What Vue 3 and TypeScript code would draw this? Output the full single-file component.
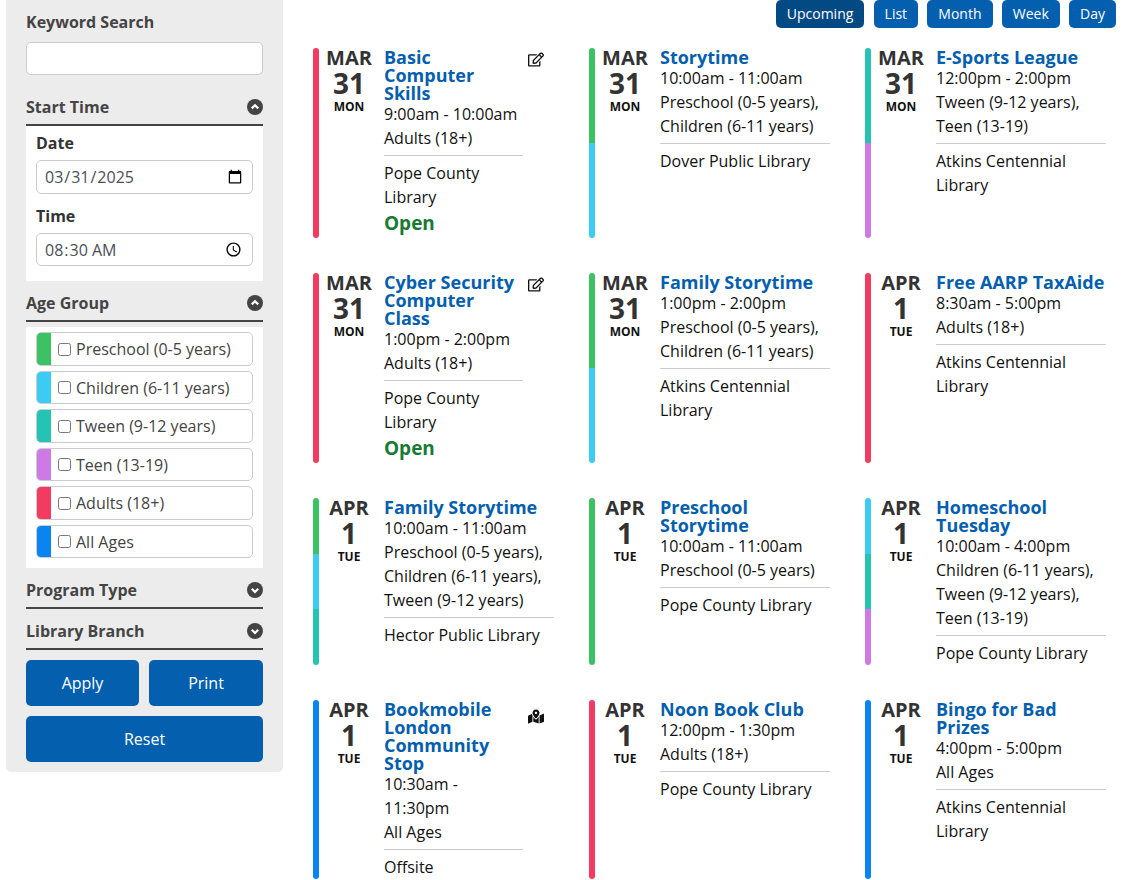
<template>
  <div class="page">
    <aside class="sidebar">
      <label class="field-title" for="keyword">Keyword Search</label>
      <input id="keyword" class="text-input keyword" type="text" />

      <div class="group-head first">
        <span>Start Time</span>
        <svg class="toggle" viewBox="0 0 16 16"><circle cx="8" cy="8" r="8" /><polyline points="4.8,9.4 8,6.2 11.2,9.4" /></svg>
      </div>
      <div class="panel start-panel">
        <label class="panel-label" for="date">Date</label>
        <input id="date" class="text-input native" type="date" value="2025-03-31" />
        <label class="panel-label time-label" for="time">Time</label>
        <input id="time" class="text-input native" type="time" value="08:30" />
      </div>

      <div class="group-head">
        <span>Age Group</span>
        <svg class="toggle" viewBox="0 0 16 16"><circle cx="8" cy="8" r="8" /><polyline points="4.8,9.4 8,6.2 11.2,9.4" /></svg>
      </div>
      <div class="panel age-panel">
        <label v-for="age in ages" :key="age.name" class="age-row">
          <span class="age-color" :style="{ background: colors[age.color] }"></span>
          <input type="checkbox" />
          <span>{{ age.name }}</span>
        </label>
      </div>

      <div v-for="name in ['Program Type', 'Library Branch']" :key="name" class="group-head">
        <span>{{ name }}</span>
        <svg class="toggle" viewBox="0 0 16 16"><circle cx="8" cy="8" r="8" /><polyline points="4.8,6.8 8,10 11.2,6.8" /></svg>
      </div>

      <div class="actions">
        <button type="button" class="action">Apply</button>
        <button type="button" class="action">Print</button>
        <button type="button" class="action wide">Reset</button>
      </div>
    </aside>

    <main class="main">
      <nav class="views">
        <button v-for="view in views" :key="view" type="button" class="view" :class="{ active: view === 'Upcoming' }">{{ view }}</button>
      </nav>

      <div class="events">
        <article v-for="event in events" :key="event.title + event.month + event.day" class="event">
          <div class="bar">
            <span v-for="c in event.bars" :key="c" :style="{ background: colors[c] }"></span>
          </div>
          <div class="date">
            <div class="month">{{ event.month }}</div>
            <div class="day">{{ event.day }}</div>
            <div class="weekday">{{ event.weekday }}</div>
          </div>
          <div class="body">
            <a class="title" href="#">{{ event.title }}</a>
            <div class="line">{{ event.time }}</div>
            <div class="line">{{ event.ages }}</div>
            <hr class="rule" />
            <div class="line">{{ event.place }}</div>
            <div v-if="event.open" class="open">Open</div>
          </div>
          <div v-if="event.icon" class="side-icon" :class="event.icon">
            <svg v-if="event.icon === 'edit'" viewBox="0 0 576 512"><path d="M402.3 344.9l32-32c5-5 13.7-1.5 13.7 5.7V464c0 26.5-21.5 48-48 48H48c-26.5 0-48-21.5-48-48V112c0-26.5 21.5-48 48-48h273.5c7.1 0 10.7 8.6 5.7 13.7l-32 32c-1.5 1.5-3.5 2.3-5.7 2.3H48v352h352V350.5c0-2.1.8-4.1 2.3-5.6zm156.6-201.8L296.3 405.7l-90.4 10c-26.2 2.9-48.5-19.2-45.6-45.6l10-90.4L432.9 17.1c22.9-22.9 59.9-22.9 82.7 0l43.2 43.2c22.9 22.9 22.9 60 .1 82.8zM460.1 174L402 115.9 216.2 301.8l-7.3 65.3 65.3-7.3L460.1 174zm64.8-79.7l-43.2-43.2c-4.1-4.1-10.8-4.1-14.8 0L436 82l58.1 58.1 30.9-30.9c4-4.2 4-10.8-.1-14.9z" /></svg>
            <svg v-else viewBox="0 0 576 512"><path d="M288 0c-69.59 0-126 56.41-126 126 0 56.26 82.35 158.8 113.9 196.02 6.39 7.54 17.82 7.54 24.2 0C331.65 284.8 414 182.26 414 126 414 56.41 357.59 0 288 0zm0 168c-23.2 0-42-18.8-42-42s18.8-42 42-42 42 18.8 42 42-18.8 42-42 42zM20.12 215.95A32.006 32.006 0 0 0 0 245.66v250.32c0 11.32 11.43 19.06 21.94 14.86L160 448V214.92c-8.84-15.98-16.07-31.54-21.25-46.42L20.12 215.95zM288 359.67c-14.07 0-27.38-6.18-36.51-16.96-19.66-23.2-40.57-49.62-59.49-76.72V448l192 64V265.99c-18.92 27.09-39.82 53.52-59.49 76.72-9.13 10.79-22.44 16.96-36.51 16.96zm266.06-198.51L416 224v288l139.88-55.95A31.996 31.996 0 0 0 576 426.34V176.02c0-11.32-11.43-19.06-21.94-14.86z" /></svg>
          </div>
        </article>
      </div>
    </main>
  </div>
</template>

<script setup lang="ts">
type AgeColor = 'preschool' | 'children' | 'tween' | 'teen' | 'adults' | 'all'

interface CalendarEvent {
  month: string
  day: string
  weekday: string
  title: string
  time: string
  ages: string
  place: string
  bars: AgeColor[]
  open?: boolean
  icon?: 'edit' | 'map'
}

const colors: Record<AgeColor, string> = {
  preschool: '#3cc163',
  children: '#3bcbf3',
  tween: '#25c3b3',
  teen: '#cd79e6',
  adults: '#f33a60',
  all: '#0a84f2'
}

const ages: { name: string; color: AgeColor }[] = [
  { name: 'Preschool (0-5 years)', color: 'preschool' },
  { name: 'Children (6-11 years)', color: 'children' },
  { name: 'Tween (9-12 years)', color: 'tween' },
  { name: 'Teen (13-19)', color: 'teen' },
  { name: 'Adults (18+)', color: 'adults' },
  { name: 'All Ages', color: 'all' }
]

const views = ['Upcoming', 'List', 'Month', 'Week', 'Day']

const mar = { month: 'MAR', day: '31', weekday: 'MON' }
const apr = { month: 'APR', day: '1', weekday: 'TUE' }

const events: CalendarEvent[] = [
  { ...mar, title: 'Basic Computer Skills', time: '9:00am - 10:00am', ages: 'Adults (18+)', place: 'Pope County Library', bars: ['adults'], open: true, icon: 'edit' },
  { ...mar, title: 'Storytime', time: '10:00am - 11:00am', ages: 'Preschool (0-5 years), Children (6-11 years)', place: 'Dover Public Library', bars: ['preschool', 'children'] },
  { ...mar, title: 'E-Sports League', time: '12:00pm - 2:00pm', ages: 'Tween (9-12 years), Teen (13-19)', place: 'Atkins Centennial Library', bars: ['tween', 'teen'] },
  { ...mar, title: 'Cyber Security Computer Class', time: '1:00pm - 2:00pm', ages: 'Adults (18+)', place: 'Pope County Library', bars: ['adults'], open: true, icon: 'edit' },
  { ...mar, title: 'Family Storytime', time: '1:00pm - 2:00pm', ages: 'Preschool (0-5 years), Children (6-11 years)', place: 'Atkins Centennial Library', bars: ['preschool', 'children'] },
  { ...apr, title: 'Free AARP TaxAide', time: '8:30am - 5:00pm', ages: 'Adults (18+)', place: 'Atkins Centennial Library', bars: ['adults'] },
  { ...apr, title: 'Family Storytime', time: '10:00am - 11:00am', ages: 'Preschool (0-5 years), Children (6-11 years), Tween (9-12 years)', place: 'Hector Public Library', bars: ['preschool', 'children', 'tween'] },
  { ...apr, title: 'Preschool Storytime', time: '10:00am - 11:00am', ages: 'Preschool (0-5 years)', place: 'Pope County Library', bars: ['preschool'] },
  { ...apr, title: 'Homeschool Tuesday', time: '10:00am - 4:00pm', ages: 'Children (6-11 years), Tween (9-12 years), Teen (13-19)', place: 'Pope County Library', bars: ['children', 'tween', 'teen'] },
  { ...apr, title: 'Bookmobile London Community Stop', time: '10:30am - 11:30pm', ages: 'All Ages', place: 'Offsite', bars: ['all'], icon: 'map' },
  { ...apr, title: 'Noon Book Club', time: '12:00pm - 1:30pm', ages: 'Adults (18+)', place: 'Pope County Library', bars: ['adults'] },
  { ...apr, title: 'Bingo for Bad Prizes', time: '4:00pm - 5:00pm', ages: 'All Ages', place: 'Atkins Centennial Library', bars: ['all'] }
]
</script>

<style scoped>
.page {
  display: flex;
  align-items: flex-start;
  padding-left: 6px;
  font-family: "Open Sans", "Liberation Sans", sans-serif;
  font-size: 16px;
  line-height: 24px;
  color: #111;
}

.sidebar {
  flex: none;
  box-sizing: border-box;
  width: 277px;
  padding: 10px 20px;
  background: #ececec;
  border-radius: 0 0 5px 5px;
}

.field-title {
  display: block;
  font-weight: 700;
  color: #444;
}

.text-input {
  display: block;
  box-sizing: border-box;
  width: 100%;
  padding: 0 7px;
  font: inherit;
  color: #495057;
  background: #fff;
  border: 1px solid #ccc;
  border-radius: 5px;
}

.keyword {
  height: 33px;
  margin-top: 8px;
}

.group-head {
  display: flex;
  align-items: center;
  justify-content: space-between;
  margin-top: 10px;
  padding-bottom: 5px;
  font-weight: 700;
  color: #444;
  border-bottom: 2px solid #444;
}

.group-head.first {
  margin-top: 20px;
}

.toggle {
  width: 16px;
  height: 16px;
}

.toggle circle {
  fill: #444;
}

.toggle polyline {
  fill: none;
  stroke: #fff;
  stroke-width: 2.2;
}

.panel {
  background: #fff;
  padding: 5px 10px 15px;
}

.panel-label {
  display: block;
  margin-bottom: 5px;
  font-weight: 700;
  color: #333;
}

.time-label {
  margin-top: 10px;
}

.native {
  height: 34px;
}

.start-panel .native + .time-label + .native {
  height: 33px;
}

.age-panel {
  display: flex;
  flex-direction: column;
  gap: 5px;
  margin-top: 5px;
  padding: 5.3px 10px 9.7px;
}

.age-row {
  display: flex;
  align-items: center;
  box-sizing: border-box;
  height: 33.5px;
  color: #444;
  background: #fff;
  border: 1px solid #ccc;
  border-radius: 5px;
  overflow: hidden;
}

.age-color {
  align-self: stretch;
  width: 15px;
  margin: -1px 0 -1px -1px;
}

.age-row input {
  width: 13px;
  height: 13px;
  margin: 0 5px 0 7px;
}

.actions {
  display: flex;
  flex-wrap: wrap;
  gap: 10px;
  margin-top: 10px;
}

.action {
  flex: 1 1 100px;
  height: 46px;
  font: inherit;
  color: #fff;
  background: #045fae;
  border: 0;
  border-radius: 5px;
}

.action:first-child {
  flex: 0 0 113px;
}

.action.wide {
  flex-basis: 100%;
}

.main {
  flex: none;
  width: 803px;
  margin-left: 30px;
}

.views {
  display: flex;
  justify-content: flex-end;
  gap: 9.25px;
}

.view {
  height: 28px;
  padding: 0 11px;
  font: inherit;
  font-size: 14px;
  line-height: 20px;
  color: #fff;
  background: #045fae;
  border: 0;
  border-radius: 5px;
}

.view.active {
  background: #034a84;
}

.events {
  display: grid;
  grid-template-columns: repeat(3, 241px);
  column-gap: 35px;
  row-gap: 35px;
  margin-top: 20px;
}

.event {
  display: flex;
  align-items: stretch;
}

.bar {
  flex: none;
  display: flex;
  flex-direction: column;
  width: 6px;
  border-radius: 3px;
  overflow: hidden;
}

.bar span {
  flex: 1;
}

.date {
  flex: none;
  width: 60px;
  margin-right: 5px;
  text-align: center;
}

.month {
  font-size: 20px;
  font-weight: 700;
  line-height: 20px;
  color: #333;
}

.day {
  margin-top: 1px;
  font-size: 28px;
  font-weight: 700;
  line-height: 28px;
  color: #333;
}

.weekday {
  margin-top: 3px;
  font-size: 12px;
  font-weight: 700;
  line-height: 14px;
  color: #111;
}

.body {
  flex: 1;
  min-width: 0;
}

.title {
  display: block;
  font-size: 18px;
  font-weight: 700;
  line-height: 18px;
  color: #045fae;
  text-decoration: none;
}

.rule {
  height: 1px;
  margin: 5px 0;
  background: #ccc;
  border: 0;
}

.open {
  font-size: 19px;
  font-weight: 700;
  line-height: 29px;
  color: #187a34;
}

.side-icon {
  flex: none;
  width: 16px;
  margin-left: 5px;
  margin-right: 10px;
  padding-top: 4px;
}

.side-icon.map {
  padding-top: 9px;
}

.side-icon svg {
  display: block;
  width: 16px;
  height: 15px;
  fill: #111;
}
</style>
<style>
html,
body {
  background: #fff;
}
</style>
